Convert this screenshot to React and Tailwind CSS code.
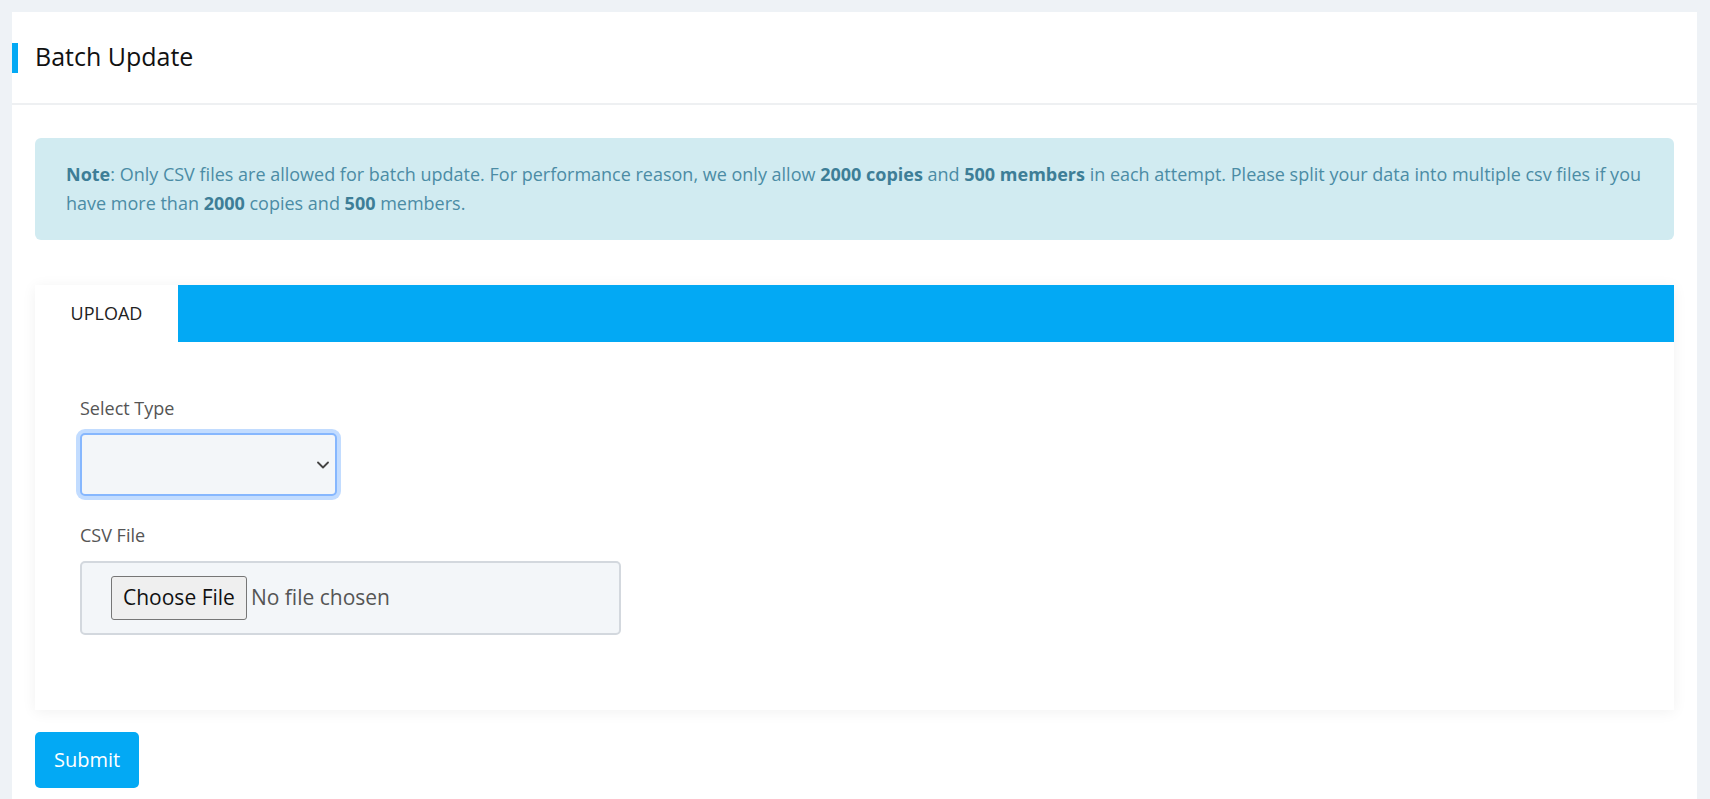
import React, { useState } from 'react';

const BatchUpdate = () => {
  const [type, setType] = useState('');

  return (
    <div className="min-h-screen bg-[#eef2f6] pt-[12px] pl-[12px] pr-[13px]" style={{ fontFamily: '"Open Sans", "Noto Sans", sans-serif' }}>
      <div className="bg-white min-h-[787px]">
        {/* header */}
        <div className="h-[93px] border-b-2 border-[#eef0f2] flex items-center">
          <div className="w-[6px] h-[30px] bg-[#03a9f4]"></div>
          <h1 className="ml-[17px] text-[25px] text-[#111] leading-none -mt-[3px]">Batch Update</h1>
        </div>

        <div className="px-[23px] pt-[33px]">
          <div className="rounded-[6px] bg-[#d1ebf1] px-[31px] py-[22px] text-[18px] leading-[29px] text-[#4b8ca5]">
            <b className="font-bold text-[#3d7e97]">Note</b>: Only CSV files are allowed for batch update. For performance reason, we only allow{' '}
            <b className="font-bold text-[#3d7e97]">2000 copies</b> and <b className="font-bold text-[#3d7e97]">500 members</b> in each attempt. Please split your data into multiple csv files if you have more than{' '}
            <b className="font-bold text-[#3d7e97]">2000</b> copies and <b className="font-bold text-[#3d7e97]">500</b> members.
          </div>

          <div className="mt-[45px] shadow-[0_2px_14px_rgba(0,0,0,0.06)]">
            <div className="flex h-[57px]">
              <div className="w-[143px] bg-white flex items-center justify-center text-[18px] text-[#222]">UPLOAD</div>
              <div className="flex-1 bg-[#03a9f4]"></div>
            </div>

            <div className="bg-white h-[368px] px-[45px] pt-[54px]">
              <label className="block text-[18px] leading-[24px] text-[#555]">Select Type</label>
              <div className="relative mt-[13px] w-[257px]">
                <select
                  value={type}
                  onChange={(e) => setType(e.target.value)}
                  className="appearance-none w-full h-[63px] rounded-[5px] border-2 border-[#86b7fe] bg-[#f3f6f9] px-[14px] text-[18px] text-[#555] outline-none shadow-[0_0_0_4px_#c2dcff]"
                >
                  <option value=""></option>
                  <option value="copies">Copies</option>
                  <option value="members">Members</option>
                </select>
                <svg className="absolute right-[8px] top-[28px] pointer-events-none" width="12" height="8" viewBox="0 0 12 8" fill="none">
                  <path d="M1 1.5l5 5 5-5" stroke="#444" strokeWidth="1.8" strokeLinecap="round" strokeLinejoin="round" />
                </svg>
              </div>

              <label className="block mt-[27px] text-[18px] leading-[24px] text-[#555]">CSV File</label>
              <input
                type="file"
                accept=".csv"
                className="block mt-[14px] w-[541px] rounded-[5px] border-2 border-[#d3d8de] bg-[#f3f6f9] px-[29px] py-[13px] text-[21px] text-[#555] file:mr-[4px] file:px-[11px] file:py-[5px] file:text-[21px] file:text-[#111] file:bg-[#efefef] file:border file:border-[#767676] file:rounded-[3px]"
              />
            </div>
          </div>

          <button className="mt-[22px] h-[56px] px-[19px] rounded-[5px] bg-[#03a9f4] text-white text-[20px]">
            Submit
          </button>
        </div>
      </div>
    </div>
  );
};

export default BatchUpdate;
